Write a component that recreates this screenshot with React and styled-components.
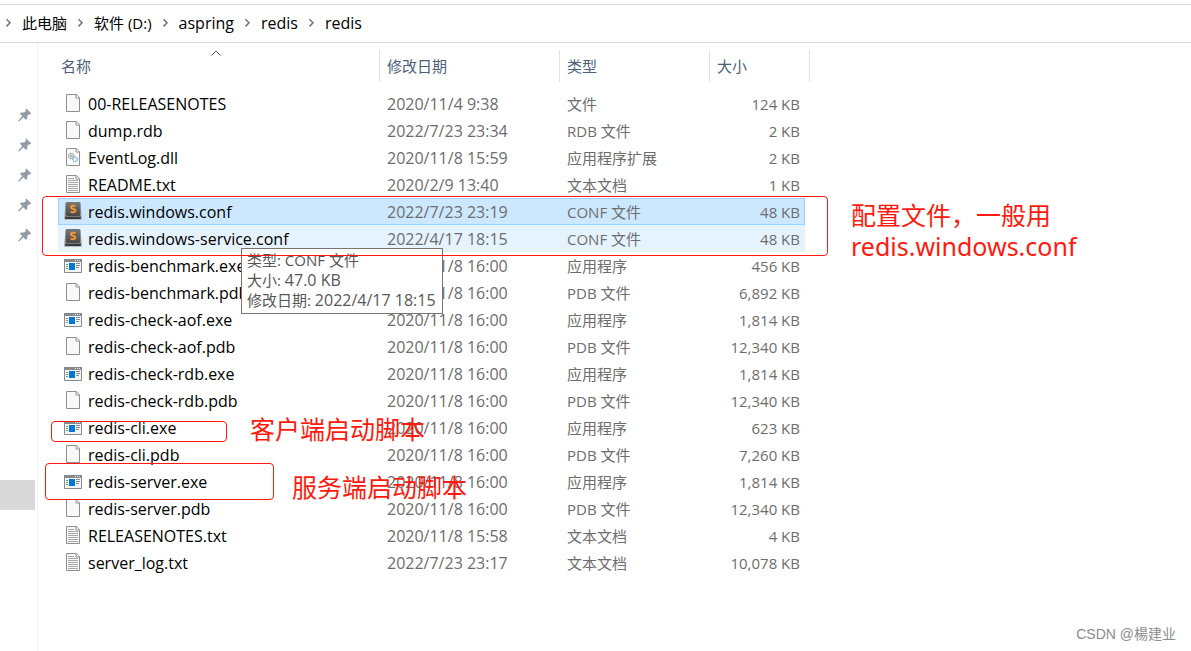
import { useState } from "react";
import styled, { createGlobalStyle, css } from "styled-components";

const GlobalStyle = createGlobalStyle`
  * {
    box-sizing: border-box;
  }

  body {
    margin: 0;
    background-color: #fff;
    color: #000;
    font-family: "Open Sans", "Noto Sans CJK SC", sans-serif;
    font-size: 15px;
  }
`;

const Page = styled.div`
  position: relative;
  display: flex;
  flex-direction: column;
  min-height: 100vh;
  padding-top: 4px;
  overflow: hidden;
`;

const AddressBar = styled.nav`
  border-top: 1px solid #d9d9d9;
  border-bottom: 1px solid #d9d9d9;
`;

const Crumbs = styled.ol`
  display: flex;
  align-items: center;
  height: 37px;
  margin: 0;
  padding: 0 0 2px;
  list-style: none;
`;

const Crumb = styled.li`
  display: flex;
  align-items: center;

  svg {
    width: 7px;
    margin: 0 10px;
  }

  &:first-child svg {
    margin-left: 5px;
  }
`;

const CrumbLink = styled.a`
  color: #000;
  font-size: ${(props) => (props.$latin ? 16 : 15)}px;
  text-decoration: none;
  line-height: 20px;
`;

const Body = styled.div`
  display: flex;
  flex: 1;
`;

const Sidebar = styled.aside`
  flex: none;
  width: 38px;
  padding-top: 57px;
  border-right: 1px solid #f3f3f3;
`;

const Pin = styled.div`
  display: flex;
  align-items: center;
  height: 30px;
  padding-left: 18px;
`;

const CurrentFolder = styled.div`
  width: 35px;
  height: 30px;
  margin-top: 230px;
  background-color: #d9d9d9;
`;

const Content = styled.main`
  flex: 1;
  padding-left: 20px;
`;

const FileTable = styled.table`
  width: 752px;
  table-layout: fixed;
  border-collapse: separate;
  border-spacing: 0;
`;

const HeadCell = styled.th`
  height: 47px;
  padding: 7px 0 8px;
  font-weight: normal;
`;

const HeadButton = styled.button`
  position: relative;
  display: block;
  width: 100%;
  height: 32px;
  padding: 0 0 2px ${(props) => (props.$first ? "3px" : "7px")};
  border: none;
  border-right: 1px solid #e2e2e2;
  background: none;
  color: #4c607a;
  font: inherit;
  text-align: left;
`;

const SortCaret = styled.svg`
  position: absolute;
  top: 0;
  left: calc(50% - 8px);
  width: 10px;
  height: 6px;
`;

const Cell = styled.td`
  height: 27px;
  padding: 0 0 0 7px;
  color: #6d6d6d;
  line-height: 20px;
  white-space: nowrap;
`;

const NameCell = styled(Cell)`
  padding-left: 6px;
  color: #000;
  font-size: 16px;
`;

const DateCell = styled(Cell)`
  font-size: 16px;
`;

const SizeCell = styled(Cell)`
  padding: 0 5px 0 0;
  text-align: right;
`;

const FileName = styled.div`
  display: flex;
  align-items: center;
  gap: 6px;

  svg {
    flex: none;
  }
`;

const Row = styled.tr`
  ${(props) =>
    props.$state === "hover" &&
    css`
      background-color: #e5f3ff;
    `}

  ${(props) =>
    props.$state === "selected" &&
    css`
      background-color: #cce8ff;

      td {
        border-top: 1px solid #99d1ff;
        border-bottom: 1px solid #99d1ff;
      }

      td:first-child {
        padding-left: 5px;
        border-left: 1px solid #99d1ff;
      }

      td:last-child {
        padding-right: 4px;
        border-right: 1px solid #99d1ff;
      }
    `}
`;

const Tooltip = styled.div`
  position: absolute;
  top: 248px;
  left: 241px;
  padding: 1px 6px 3px 5px;
  border: 1px solid #767676;
  background-color: #fff;
  color: #575757;
  line-height: 20px;
  white-space: nowrap;
`;

const TooltipLine = styled.div`
  height: 20px;
`;

const TooltipValue = styled.span`
  font-size: 16px;
`;

const Outline = styled.div`
  position: absolute;
  top: ${(props) => props.$top}px;
  left: ${(props) => props.$left}px;
  width: ${(props) => props.$width}px;
  height: ${(props) => props.$height}px;
  border: 1px solid #ff1a0d;
  border-radius: 4px;
  pointer-events: none;
`;

const Note = styled.div`
  position: absolute;
  top: ${(props) => props.$top}px;
  left: ${(props) => props.$left}px;
  color: #ff1a0d;
  font-family: "Noto Sans", "Noto Sans CJK SC", sans-serif;
  font-size: 25px;
  line-height: 31px;
  white-space: pre;
  pointer-events: none;
`;

const Watermark = styled.footer`
  position: absolute;
  right: 15px;
  bottom: 7px;
  color: #8c8c8c;
  font-family: "Liberation Sans", "Noto Sans CJK SC", sans-serif;
  font-size: 14px;
  line-height: 20px;
`;

const Chevron = () => (
  <svg width="7" height="10" viewBox="0 0 7 10" aria-hidden="true">
    <path d="M1.5 1.2 5 4.8 1.5 8.4" fill="none" stroke="#777" strokeWidth="1.6" />
  </svg>
);

const PinIcon = () => (
  <svg width="14" height="14" viewBox="0 0 14 14" aria-hidden="true">
    <path
      d="M8.2.6 13.4 5.5 12 6.4 11 6.2 9.3 8.1 9.3 10.8 7.9 12 5.4 9.3 1 13.4.3 13.4.4 12.6 4.3 8 1.9 5.8 3.1 4.4 6 4.6 7.9 2.9 7.5 1.6Z"
      fill="#929ca6"
    />
  </svg>
);

const Sheet = ({ children }) => (
  <svg width="18" height="19" viewBox="0 0 18 19" aria-hidden="true">
    <path d="M2.5.5h10l3 3v14h-13z" fill="#f9f9f9" stroke="#8f8f8f" />
    <path d="M12 .5v3.5h3.5" fill="#fff" stroke="#8f8f8f" />
    {children}
  </svg>
);

const TextIcon = () => (
  <Sheet>
    <path
      d="M4 3.5h6M4 5.5h10M4 7.5h10M4 9.5h10M4 11.5h10M4 13.5h10M4 15.5h10"
      stroke="#a8a8a8"
    />
  </Sheet>
);

const DllIcon = () => (
  <Sheet>
    <circle cx="7.3" cy="8" r="2.7" fill="#eee" stroke="#99a1a8" strokeWidth="1.2" strokeDasharray="1.5 .6" />
    <circle cx="7.3" cy="8" r="1" fill="none" stroke="#8d969e" strokeWidth=".8" />
    <circle cx="11" cy="11.3" r="2.3" fill="#dceefb" stroke="#7fabd0" strokeWidth="1.2" strokeDasharray="1.4 .5" />
    <circle cx="11" cy="11.3" r=".8" fill="#fff" />
  </Sheet>
);

const ExeIcon = () => (
  <svg width="18" height="14" viewBox="0 0 18 14" aria-hidden="true">
    <path d="M.5.5h17v13H.5z" fill="#f5f5f5" stroke="#858a8e" />
    <path d="M0 0h18v3H0z" fill="#858a8e" />
    <path d="M11 1.5h1M13 1.5h1M15 1.5h1" stroke="#e5e5e5" />
    <path d="M2 5.5h2M2 7.5h2M2 9.5h2M12 4.5h4M12 6.5h4M12 8.5h3" stroke="#858a8e" />
    <path d="M5 4h6v7H5z" fill="#0078d7" />
  </svg>
);

const ConfIcon = () => (
  <svg width="18" height="19" viewBox="0 0 18 19" aria-hidden="true">
    <defs>
      <linearGradient id="conf-key" x1="0" y1="0" x2="0" y2="1">
        <stop offset="0" stopColor="#787878" />
        <stop offset="1" stopColor="#484848" />
      </linearGradient>
    </defs>
    <path d="M2 0h14l2 14v3q0 1-1 1H1q-1 0-1-1v-3z" fill="#b4b8bb" />
    <path d="M1 14.5h16v1.5q0 1-1 1H2q-1 0-1-1z" fill="#3a3a3a" />
    <rect x="1.5" width="15" height="14" rx="1.5" fill="url(#conf-key)" />
    <path
      d="M11.4 4.3C10.2 3.5 6.9 3.2 6.9 5.2c0 1.9 4.6 1.2 4.6 3.4 0 2-3.4 1.9-4.9.9"
      fill="none"
      stroke="#f9982f"
      strokeWidth="1.9"
    />
  </svg>
);

const FileIcon = ({ kind }) => {
  if (kind === "txt") return <TextIcon />;
  if (kind === "dll") return <DllIcon />;
  if (kind === "exe") return <ExeIcon />;
  if (kind === "conf") return <ConfIcon />;
  return <Sheet />;
};

const path = ["此电脑", "软件 (D:)", "aspring", "redis", "redis"];

const files = [
  ["00-RELEASENOTES", "2020/11/4 9:38", "文件", "124 KB"],
  ["dump.rdb", "2022/7/23 23:34", "RDB 文件", "2 KB"],
  ["EventLog.dll", "2020/11/8 15:59", "应用程序扩展", "2 KB"],
  ["README.txt", "2020/2/9 13:40", "文本文档", "1 KB"],
  ["redis.windows.conf", "2022/7/23 23:19", "CONF 文件", "48 KB"],
  ["redis.windows-service.conf", "2022/4/17 18:15", "CONF 文件", "48 KB"],
  ["redis-benchmark.exe", "2020/11/8 16:00", "应用程序", "456 KB"],
  ["redis-benchmark.pdb", "2020/11/8 16:00", "PDB 文件", "6,892 KB"],
  ["redis-check-aof.exe", "2020/11/8 16:00", "应用程序", "1,814 KB"],
  ["redis-check-aof.pdb", "2020/11/8 16:00", "PDB 文件", "12,340 KB"],
  ["redis-check-rdb.exe", "2020/11/8 16:00", "应用程序", "1,814 KB"],
  ["redis-check-rdb.pdb", "2020/11/8 16:00", "PDB 文件", "12,340 KB"],
  ["redis-cli.exe", "2020/11/8 16:00", "应用程序", "623 KB"],
  ["redis-cli.pdb", "2020/11/8 16:00", "PDB 文件", "7,260 KB"],
  ["redis-server.exe", "2020/11/8 16:00", "应用程序", "1,814 KB"],
  ["redis-server.pdb", "2020/11/8 16:00", "PDB 文件", "12,340 KB"],
  ["RELEASENOTES.txt", "2020/11/8 15:58", "文本文档", "4 KB"],
  ["server_log.txt", "2022/7/23 23:17", "文本文档", "10,078 KB"],
];

const App = () => {
  const [selected, setSelected] = useState("redis.windows.conf");
  const hovered = "redis.windows-service.conf";

  const rowState = (name) => {
    if (name === selected) return "selected";
    return name === hovered ? "hover" : undefined;
  };

  return (
    <Page>
      <GlobalStyle />
      <AddressBar aria-label="地址">
        <Crumbs>
          {path.map((part, index) => (
            <Crumb key={index}>
              <Chevron />
              <CrumbLink href="#" $latin={/^[a-z]+$/.test(part)}>
                {part}
              </CrumbLink>
            </Crumb>
          ))}
        </Crumbs>
      </AddressBar>

      <Body>
        <Sidebar>
          {[0, 1, 2, 3, 4].map((pin) => (
            <Pin key={pin}>
              <PinIcon />
            </Pin>
          ))}
          <CurrentFolder />
        </Sidebar>

        <Content>
          <FileTable>
            <colgroup>
              <col width="322" />
              <col width="180" />
              <col width="150" />
              <col width="95" />
              <col width="5" />
            </colgroup>
            <thead>
              <tr>
                <HeadCell>
                  <HeadButton $first>
                    名称
                    <SortCaret viewBox="0 0 10 6">
                      <path d="M.5 5.5 5 1l4.5 4.5" fill="none" stroke="#555" />
                    </SortCaret>
                  </HeadButton>
                </HeadCell>
                <HeadCell>
                  <HeadButton>修改日期</HeadButton>
                </HeadCell>
                <HeadCell>
                  <HeadButton>类型</HeadButton>
                </HeadCell>
                <HeadCell colSpan={2}>
                  <HeadButton>大小</HeadButton>
                </HeadCell>
              </tr>
            </thead>
            <tbody>
              {files.map(([name, date, type, size]) => (
                <Row
                  key={name}
                  $state={rowState(name)}
                  onClick={() => setSelected(name)}
                >
                  <NameCell>
                    <FileName>
                      <FileIcon kind={name.split(".").pop()} />
                      {name}
                    </FileName>
                  </NameCell>
                  <DateCell>{date}</DateCell>
                  <Cell>{type}</Cell>
                  <SizeCell>{size}</SizeCell>
                </Row>
              ))}
            </tbody>
          </FileTable>
        </Content>
      </Body>

      <Tooltip role="tooltip">
        <TooltipLine>类型: CONF 文件</TooltipLine>
        <TooltipLine>
          大小: <TooltipValue>47.0 KB</TooltipValue>
        </TooltipLine>
        <TooltipLine>
          修改日期: <TooltipValue>2022/4/17 18:15</TooltipValue>
        </TooltipLine>
      </Tooltip>

      <Outline $top={196} $left={42} $width={786} $height={60} />
      <Outline $top={421} $left={51} $width={176} $height={21} />
      <Outline $top={463} $left={45} $width={229} $height={37} />
      <Note $top={200} $left={851}>
        {"配置文件，一般用\nredis.windows.conf"}
      </Note>
      <Note $top={414} $left={250}>客户端启动脚本</Note>
      <Note $top={472} $left={292}>服务端启动脚本</Note>

      <Watermark>CSDN @楊建业</Watermark>
    </Page>
  );
};

export default App;
